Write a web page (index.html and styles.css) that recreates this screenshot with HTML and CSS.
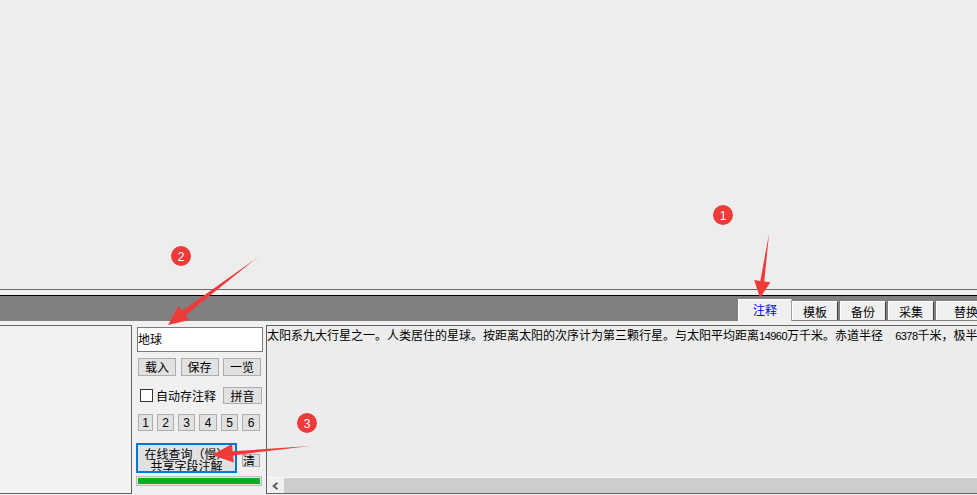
FILE: index.html
```html
<!DOCTYPE html>
<html lang="zh-CN">
<head>
<meta charset="utf-8">
<title>注释</title>
<link rel="stylesheet" href="styles.css">
</head>
<body>
<div class="app">
  <div class="canvas"></div>
  <div class="splitter"></div>
  <div class="tabbar">
    <div class="tab active">注释</div>
    <div class="tab">模板</div>
    <div class="tab">备份</div>
    <div class="tab">采集</div>
    <div class="tab last">替换</div>
  </div>
  <div class="content">
    <div class="tree"></div>
    <div class="side">
      <div class="field">地球</div>
      <div class="row r-btns">
        <div class="btn w38">载入</div>
        <div class="btn w38">保存</div>
        <div class="btn w38">一览</div>
      </div>
      <div class="row r-check">
        <div class="check"><span class="box"></span><span>自动存注释</span></div>
        <div class="btn w39 h16">拼音</div>
      </div>
      <div class="row r-nums">
        <div class="btn num n15">1</div>
        <div class="btn num">2</div>
        <div class="btn num">3</div>
        <div class="btn num n18">4</div>
        <div class="btn num">5</div>
        <div class="btn num n18">6</div>
      </div>
      <div class="row r-online">
        <div class="btn online"><span>在线查询（慢）</span><span>共享字段注解</span></div>
        <div class="btn clear">清</div>
      </div>
      <div class="progress"><div class="fill"></div></div>
    </div>
    <div class="memo">
      <div class="text">太阳系九大行星之一。人类居住的星球。按距离太阳的次序计为第三颗行星。与太阳平均距离<span class="digits">14960</span>万千米。赤道半径　<span class="digits">6378</span>千米，极半径6357千米。</div>
      <div class="hscroll">
        <div class="arrow"><svg width="7" height="8" viewBox="0 0 7 8"><path d="M5.5 0.8 L1.6 4 L5.5 7.2" fill="none" stroke="#5f5f5f" stroke-width="2"/></svg></div>
        <div class="thumb"></div>
      </div>
    </div>
  </div>
</div>
<svg class="notes" width="977" height="495" viewBox="0 0 977 495">
  <g fill="#ef3a3a">
    <polygon points="769,234 764.3,281.5 770.4,282.3 760,298 754.2,280.1 760.3,280.9"/>
    <polygon points="258,257 185.6,315.2 189.5,320 168,325 178.4,305.8 182.3,310.8"/>
    <polygon points="310,446 233.1,455.4 233.8,462.5 212,455 232,444 232.7,451.2"/>
    <circle cx="723" cy="215" r="10"/>
    <circle cx="181" cy="256" r="10"/>
    <circle cx="307" cy="423" r="10"/>
  </g>
  <g fill="#ffffff" font-family="Liberation Sans, Arial, sans-serif" font-size="12" text-anchor="middle">
    <text x="723" y="219.5">1</text>
    <text x="181" y="260.5">2</text>
    <text x="307" y="427.5">3</text>
  </g>
</svg>
</body>
</html>
```

FILE: styles.css
```css
* { box-sizing: border-box; }

body {
  margin: 0;
  width: 977px;
  height: 495px;
  overflow: hidden;
  position: relative;
  background: #ececec;
  font-family: "Noto Sans CJK SC", "Noto Sans", sans-serif;
  font-size: 12px;
  color: #000;
}

.app {
  width: 977px;
  height: 495px;
  display: flex;
  flex-direction: column;
}

.canvas {
  height: 289px;
  background: #ededed;
}

.splitter {
  height: 7px;
  border-top: 1px solid #6b6b6b;
  border-bottom: 1px solid #000;
  background: #f0f0f0;
}

.tabbar {
  height: 25px;
  background: #808080;
  display: flex;
  align-items: flex-end;
  padding-left: 738px;
  overflow: hidden;
  white-space: nowrap;
}

.tab {
  flex: none;
  width: 46px;
  height: 19px;
  margin-bottom: 1px;
  margin-right: 2px;
  background: #f0f0f0;
  border-top: 1px solid #ffffff;
  border-left: 1px solid #ffffff;
  border-right: 1px solid #404040;
  display: flex;
  align-items: center;
  justify-content: center;
  line-height: 14px;
  padding-top: 1px;
}

.tab.active {
  width: 54px;
  height: 22px;
  margin-bottom: 0;
  margin-right: 0;
  color: #0000ff;
  border-right-color: #a0a0a0;
  padding-top: 0;
  padding-bottom: 2px;
}

.tab.last {
  width: 60px;
}

.content {
  height: 174px;
  display: flex;
  background: #f0f0f0;
}

.tree {
  width: 132px;
  margin-top: 4px;
  height: 169px;
  background: #f2f2f2;
  border-top: 1px solid #646464;
  border-right: 1px solid #646464;
  border-bottom: 1px solid #646464;
}

.side {
  width: 134px;
  padding-left: 4px;
  display: flex;
  flex-direction: column;
}

.field {
  margin-top: 6px;
  margin-left: 1px;
  width: 126px;
  height: 25px;
  background: #fff;
  border: 1px solid #7a7a7a;
  line-height: 22px;
  padding-left: 0;
  font-size: 12px;
}

.row {
  display: flex;
  align-items: center;
}

.r-btns {
  margin-top: 6px;
  margin-left: 2px;
  width: 123px;
  justify-content: space-between;
}

.btn {
  background: #e1e1e1;
  border: 1px solid #adadad;
  display: flex;
  align-items: center;
  justify-content: center;
  line-height: 14px;
}

.w38 { width: 38px; height: 18px; }
.w39 { width: 39px; }
.h16 { height: 17px; }

.r-check {
  margin-top: 11px;
  margin-left: 4px;
  width: 122px;
  justify-content: space-between;
}

.check {
  display: flex;
  align-items: center;
  gap: 3px;
}

.box {
  width: 13px;
  height: 13px;
  background: #fff;
  border: 1px solid #333;
}

.r-nums {
  margin-top: 10px;
  margin-left: 2px;
  width: 122px;
  justify-content: space-between;
}

.num {
  width: 17px;
  height: 17px;
  font-family: "Liberation Sans", Arial, sans-serif;
  font-size: 12px;
}

.n15 { width: 15px; }
.n18 { width: 18px; }

.r-online {
  margin-top: 12px;
  align-items: flex-start;
}

.online {
  width: 101px;
  height: 30px;
  border: 2px solid #0078d7;
  flex-direction: column;
  justify-content: flex-start;
  padding-top: 3px;
  line-height: 12px;
  overflow: hidden;
}

.online span {
  display: block;
  text-align: center;
  white-space: nowrap;
}

.clear {
  margin-left: 5px;
  margin-top: 11px;
  width: 18px;
  height: 13px;
  line-height: 12px;
  overflow: hidden;
  justify-content: flex-start;
  padding-left: 0;
}

.progress {
  margin-top: 3px;
  width: 126px;
  height: 10px;
  border: 1px solid #bcbcbc;
  background: #e6e6e6;
  padding: 1px;
}

.fill {
  height: 100%;
  background: #06b025;
}

.memo {
  flex: 1;
  min-width: 0;
  margin-top: 4px;
  height: 169px;
  background: #ececec;
  border-top: 1px solid #646464;
  border-left: 1px solid #646464;
  border-bottom: 1px solid #646464;
  display: flex;
  flex-direction: column;
  overflow: hidden;
}

.text {
  white-space: nowrap;
  line-height: 16px;
  padding-top: 1px;
  padding-left: 0;
}

.digits {
  font-family: "Liberation Sans", Arial, sans-serif;
  font-size: 11px;
  letter-spacing: -0.5px;
}

.hscroll {
  margin-top: auto;
  height: 16px;
  border-top: 1px solid #f7f7f7;
  display: flex;
}

.arrow {
  width: 17px;
  background: #f0f0f0;
  display: flex;
  align-items: center;
  justify-content: center;
}

.thumb {
  flex: 1;
  background: #cdcdcd;
}

.notes {
  position: absolute;
  left: 0;
  top: 0;
  pointer-events: none;
}
```
